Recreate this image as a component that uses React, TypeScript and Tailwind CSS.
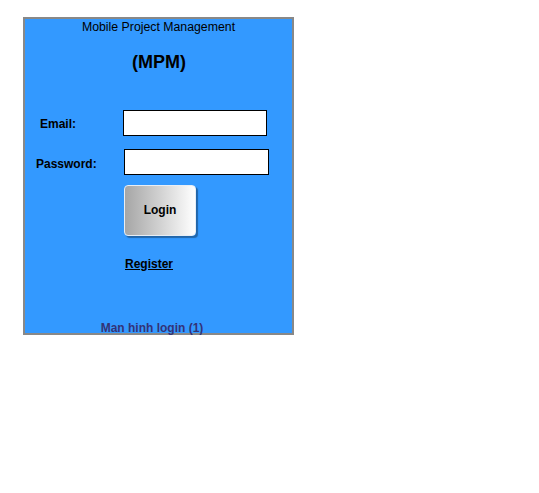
export default function App() {
  return (
    <div className="min-h-screen bg-white pl-[23px] pt-[17px]" style={{ fontFamily: '"Liberation Sans", Arial, sans-serif' }}>
      <div className="flex h-[318px] w-[271px] flex-col border-2 border-[#888888] bg-[#3399ff] text-black">
        <div className="pt-[1px] text-center text-[12.3px] leading-[15px]">Mobile Project Management</div>
        <div className="mt-[16px] pl-[1px] text-center text-[18px] font-bold leading-[22px]">(MPM)</div>

        <div className="mt-[37px] flex items-center">
          <span className="w-[98px] pl-[15px] pt-[2px] text-[12px] font-bold">Email:</span>
          <input className="h-[26px] w-[144px] border border-black bg-white outline-none" />
        </div>
        <div className="mt-[13px] flex items-center">
          <span className="w-[99px] pl-[11px] pt-[3px] text-[12px] font-bold">Password:</span>
          <input className="h-[26px] w-[145px] border border-black bg-white outline-none" />
        </div>

        <div className="mt-[10px] pl-[99px]">
          <button
            type="button"
            className="h-[51px] w-[72px] rounded-[4px] border border-[#e8eef5] bg-gradient-to-r from-[#a6a6a6] to-white pb-[2px] text-[12px] font-bold shadow-[2px_2px_1px_#2266aa]"
          >
            Login
          </button>
        </div>

        <div className="mt-[15px] pl-[100px]">
          <span className="text-[12px] font-bold underline">Register</span>
        </div>

        <div className="mt-auto mb-[-2px] text-center leading-[14px]">
          <span className="pr-[13px] text-[12px] font-bold leading-[14px] text-[#333377]">Man hinh login (1)</span>
        </div>
      </div>
    </div>
  );
}
